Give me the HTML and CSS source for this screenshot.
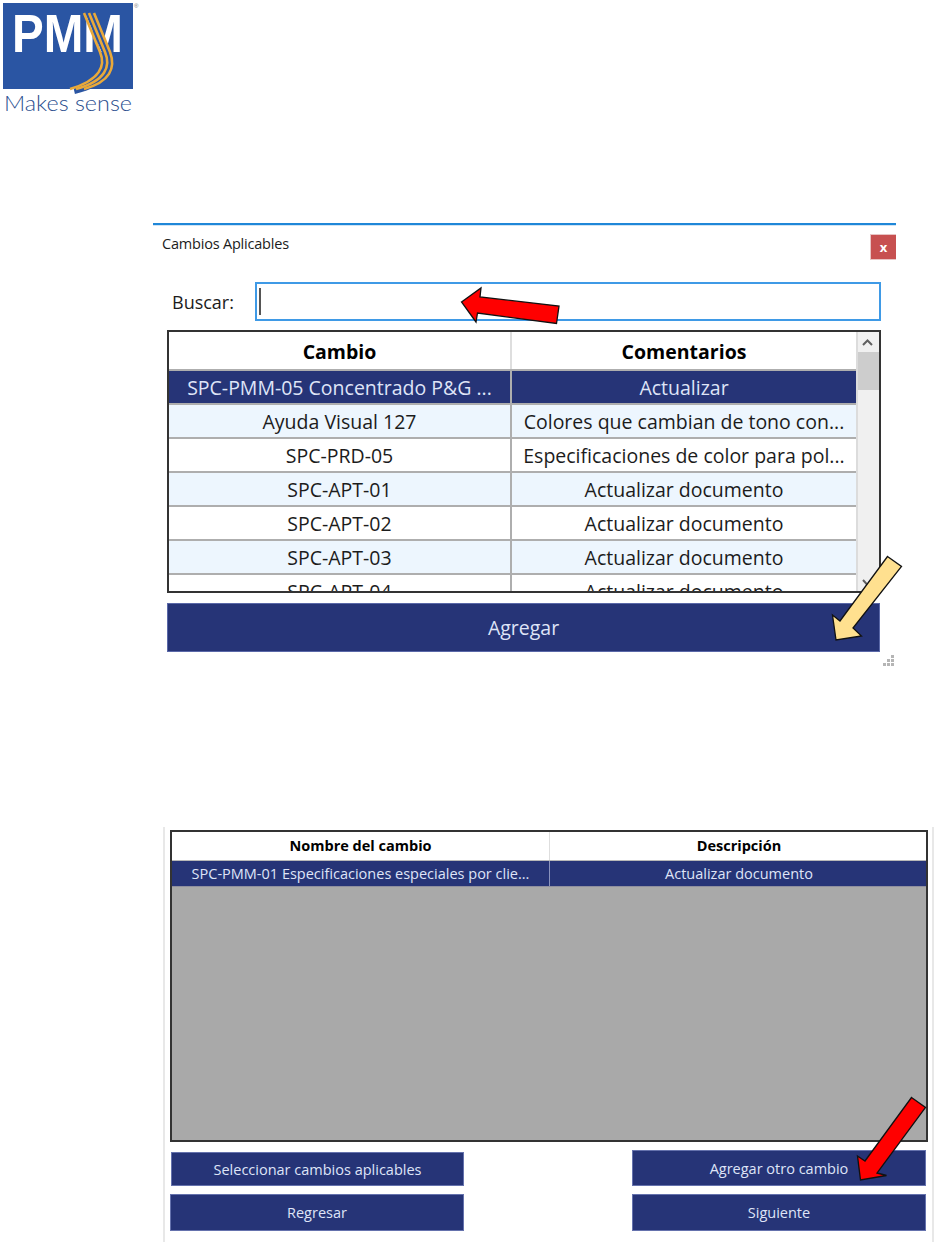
FILE: index.html
```html
<!DOCTYPE html>
<html lang="es">
<head>
<meta charset="utf-8">
<title>Cambios Aplicables</title>
<link rel="stylesheet" href="styles.css">
</head>
<body>
<div class="page">
  <header class="logo-wrap">
    <svg class="logo" width="140" height="116" viewBox="0 0 140 116">
      <rect x="3" y="3" width="130" height="86" fill="#2a55a3"/>
      <text class="logo-pmm" x="12" y="52" textLength="111" lengthAdjust="spacingAndGlyphs">PMM</text>
      <g fill="none" stroke="#2a55a3" stroke-width="8">
        <path d="M89 12 L106 52 C114 68 108 82 74 90"/>
      </g>
      <g fill="none" stroke="#e9a93a" stroke-width="2.6" clip-path="none">
        <path d="M84 13 L100 52 C106 66 100 80 70 89"/>
        <path d="M89 13 L105 52 C111 66 106 81 76 89"/>
        <path d="M94 13 L110 52 C116 68 110 82 84 89"/>
      </g>
      <text class="logo-reg" x="134" y="8">®</text>
      <text class="logo-tag" x="4" y="111" textLength="128" lengthAdjust="spacingAndGlyphs">Makes sense</text>
    </svg>
  </header>

  <section class="dialog">
    <div class="dialog-title">
      <span>Cambios Aplicables</span>
      <button class="close">x</button>
    </div>
    <div class="search">
      <label class="search-label">Buscar:</label>
      <div class="search-box"><span class="caret"></span></div>
    </div>
    <div class="table-a">
      <div class="table-a-body">
        <div class="row-a head"><div>Cambio</div><div>Comentarios</div></div>
        <div class="row-a selected"><div>SPC-PMM-05 Concentrado P&amp;G ...</div><div>Actualizar</div></div>
        <div class="row-a alt"><div>Ayuda Visual 127</div><div>Colores que cambian de tono con...</div></div>
        <div class="row-a"><div>SPC-PRD-05</div><div>Especificaciones de color para pol...</div></div>
        <div class="row-a alt"><div>SPC-APT-01</div><div>Actualizar documento</div></div>
        <div class="row-a"><div>SPC-APT-02</div><div>Actualizar documento</div></div>
        <div class="row-a alt"><div>SPC-APT-03</div><div>Actualizar documento</div></div>
        <div class="row-a"><div>SPC-APT-04</div><div>Actualizar documento</div></div>
      </div>
      <div class="scrollbar">
        <svg class="chev" width="23" height="20" viewBox="0 0 23 20"><path d="M7 13 L11.5 8.500 L16 13" fill="none" stroke="#606060" stroke-width="2"/></svg>
        <div class="thumb"></div>
        <div class="track"></div>
        <svg class="chev" width="23" height="16" viewBox="0 0 23 16"><path d="M7 5 L11.500 10 L16 5" fill="none" stroke="#606060" stroke-width="2"/></svg>
      </div>
    </div>
    <button class="btn btn-add">Agregar</button>
    <svg class="grip" width="12" height="11" viewBox="0 0 12 11" fill="#b5b5b5">
      <rect x="8" y="0" width="3" height="3"/><rect x="4" y="4" width="3" height="3"/><rect x="8" y="4" width="3" height="3"/>
      <rect x="0" y="8" width="3" height="3"/><rect x="4" y="8" width="3" height="3"/><rect x="8" y="8" width="3" height="3"/>
    </svg>
  </section>

  <section class="panel">
    <div class="table-b">
      <div class="row-b head"><div>Nombre del cambio</div><div>Descripción</div></div>
      <div class="row-b selected"><div>SPC-PMM-01 Especificaciones especiales por clie...</div><div>Actualizar documento</div></div>
    </div>
    <div class="actions">
      <button class="btn btn-s sel">Seleccionar cambios aplicables</button>
      <button class="btn btn-s other">Agregar otro cambio</button>
      <button class="btn btn-s back">Regresar</button>
      <button class="btn btn-s next">Siguiente</button>
    </div>
  </section>

  <svg class="arrows" width="945" height="1242" viewBox="0 0 945 1242">
    <polygon class="arrow-red" points="461.500,302 481,288 480,297 559,306 556.500,323.500 477.500,313 476,322"/>
    <polygon class="arrow-yellow" points="887.500,556.500 901.500,566.500 853,628 861.500,636 836,640 832.500,615 840,621"/>
    <polygon class="arrow-red" points="911.500,1097.500 925.500,1107.500 877,1173 886.500,1175.500 860.500,1180 857.500,1156 865,1161"/>
  </svg>
</div>
</body>
</html>
```
FILE: styles.css
```css
* { box-sizing: border-box; }
html, body { margin: 0; padding: 0; background: #fff; }
body { font-family: "Open Sans", "Noto Sans", "Liberation Sans", sans-serif; color: #1c1c1c; }
button { font-family: inherit; padding: 0; cursor: default; }

.page { position: relative; width: 945px; height: 1242px; overflow: hidden; }

.logo-wrap { height: 223px; }
.logo { display: block; }
.logo-pmm { font-family: "Liberation Sans", sans-serif; font-weight: 700; font-size: 54px; fill: #fff; }
.logo-reg { font-family: "Liberation Sans", sans-serif; font-size: 6px; fill: #777; }
.logo-tag { font-family: "Lato", sans-serif; font-weight: 300; font-size: 22px; fill: #2c4f8f; }

.dialog {
  position: relative;
  margin-left: 153px;
  width: 743px;
  height: 447px;
  border-top: 2px solid #1f87d8;
  box-shadow: inset 0 1px 0 #cfe4f5;
  padding-left: 14px;
}
.dialog-title {
  display: flex;
  justify-content: space-between;
  align-items: flex-start;
  height: 57px;
  padding: 9px 0 0 0;
  margin-left: -5px;
  font-size: 14.500px;
  letter-spacing: -0.2px;
  line-height: 20px;
}
.close {
  width: 26px;
  height: 26px;
  border: 1px solid #e8c4c4;
  border-right: 0;
  background: #c75050;
  color: #fff;
  font-size: 13px;
  font-weight: 700;
  line-height: 20px;
}
.search { display: flex; align-items: center; width: 714px; height: 39px; }
.search-label { width: 88px; padding-left: 5px; font-size: 18px; }
.search-box {
  flex: 1;
  height: 39px;
  border: 2px solid #3f9ae6;
  padding: 4px 0 0 2px;
  background: #fff;
}
.caret { display: block; width: 2px; height: 27px; background: #555; }

.table-a {
  display: flex;
  width: 714px;
  height: 263px;
  margin-top: 9px;
  border: 2px solid #333;
  overflow: hidden;
}
.table-a-body { width: 687px; flex: none; overflow: hidden; }
.row-a {
  display: grid;
  grid-template-columns: 343px 344px;
  height: 34px;
  font-size: 19.500px;
  line-height: 33px;
  text-align: center;
  white-space: nowrap;
  border-bottom: 2px solid #aeaeae;
}
.row-a > div { overflow: hidden; border-right: 2px solid #aeaeae; }
.row-a > div:last-child { border-right: 0; }
.row-a.head {
  height: 39px;
  line-height: 40px;
  font-weight: 700;
  color: #000;
}
.row-a.head > div { border-right-color: #dedede; }
.row-a.selected { background: #263477; color: #dfe4f7; }
.row-a.selected > div:last-child { background: #263477; }
.row-a.alt { background: #edf6fe; }
.scrollbar {
  flex: 1;
  display: flex;
  flex-direction: column;
  background: #f0f0f0;
  border-left: 2px solid #dcdcdc;
}
.chev { display: block; flex: none; margin-left: -2px; }
.thumb { height: 38px; margin: 0 0 0 0; background: #cdcdcd; flex: none; }
.track { flex: 1; }

.btn { display: block; border: 1px solid #5a68a8; background: #263477; color: #dfe4f7; }
.btn-add {
  width: 713px;
  height: 49px;
  margin-top: 10px;
  font-size: 19.500px;
}
.grip { position: absolute; left: 730px; top: 430px; }

.panel {
  margin-left: 163px;
  width: 771px;
  height: 572px;
  margin-top: 0;
  position: relative;
  top: 157px;
  border-left: 2px solid #e8e8e8;
  border-right: 2px solid #e8e8e8;
  padding: 3px 0 0 5px;
}
.table-b {
  width: 758px;
  height: 312px;
  border: 2px solid #333;
  background: #a9a9a9;
}
.row-b {
  display: grid;
  grid-template-columns: 378px 378px;
  font-size: 14.500px;
  text-align: center;
  white-space: nowrap;
  background: #fff;
}
.row-b > div { overflow: hidden; border-right: 1px solid #dedede; }
.row-b > div:last-child { border-right: 0; }
.row-b.head { height: 29px; line-height: 28px; font-weight: 700; color: #000; border-bottom: 1px solid #b8b8b8; }
.row-b.selected { height: 26px; line-height: 25px; background: #263477; color: #dfe4f7; border-bottom: 1px solid #8f8f9f; }
.row-b.selected > div { border-right-color: #8a93bd; }

.actions {
  display: grid;
  grid-template-columns: 294px 294px;
  justify-content: space-between;
  width: 756px;
  row-gap: 8px;
  margin-top: 8px;
}
.btn-s { font-size: 14.500px; height: 36px; border-color: #6572ad; }
.sel { height: 34px; margin-left: 1px; width: 293px; align-self: end; }
.back, .next { height: 37px; }
.other { width: 294px; }

.arrows { position: absolute; left: 0; top: 0; pointer-events: none; }
.arrow-red { fill: #ff0000; stroke: #111; stroke-width: 1.300; }
.arrow-yellow { fill: #ffe08f; stroke: #111; stroke-width: 1.300; }
```
